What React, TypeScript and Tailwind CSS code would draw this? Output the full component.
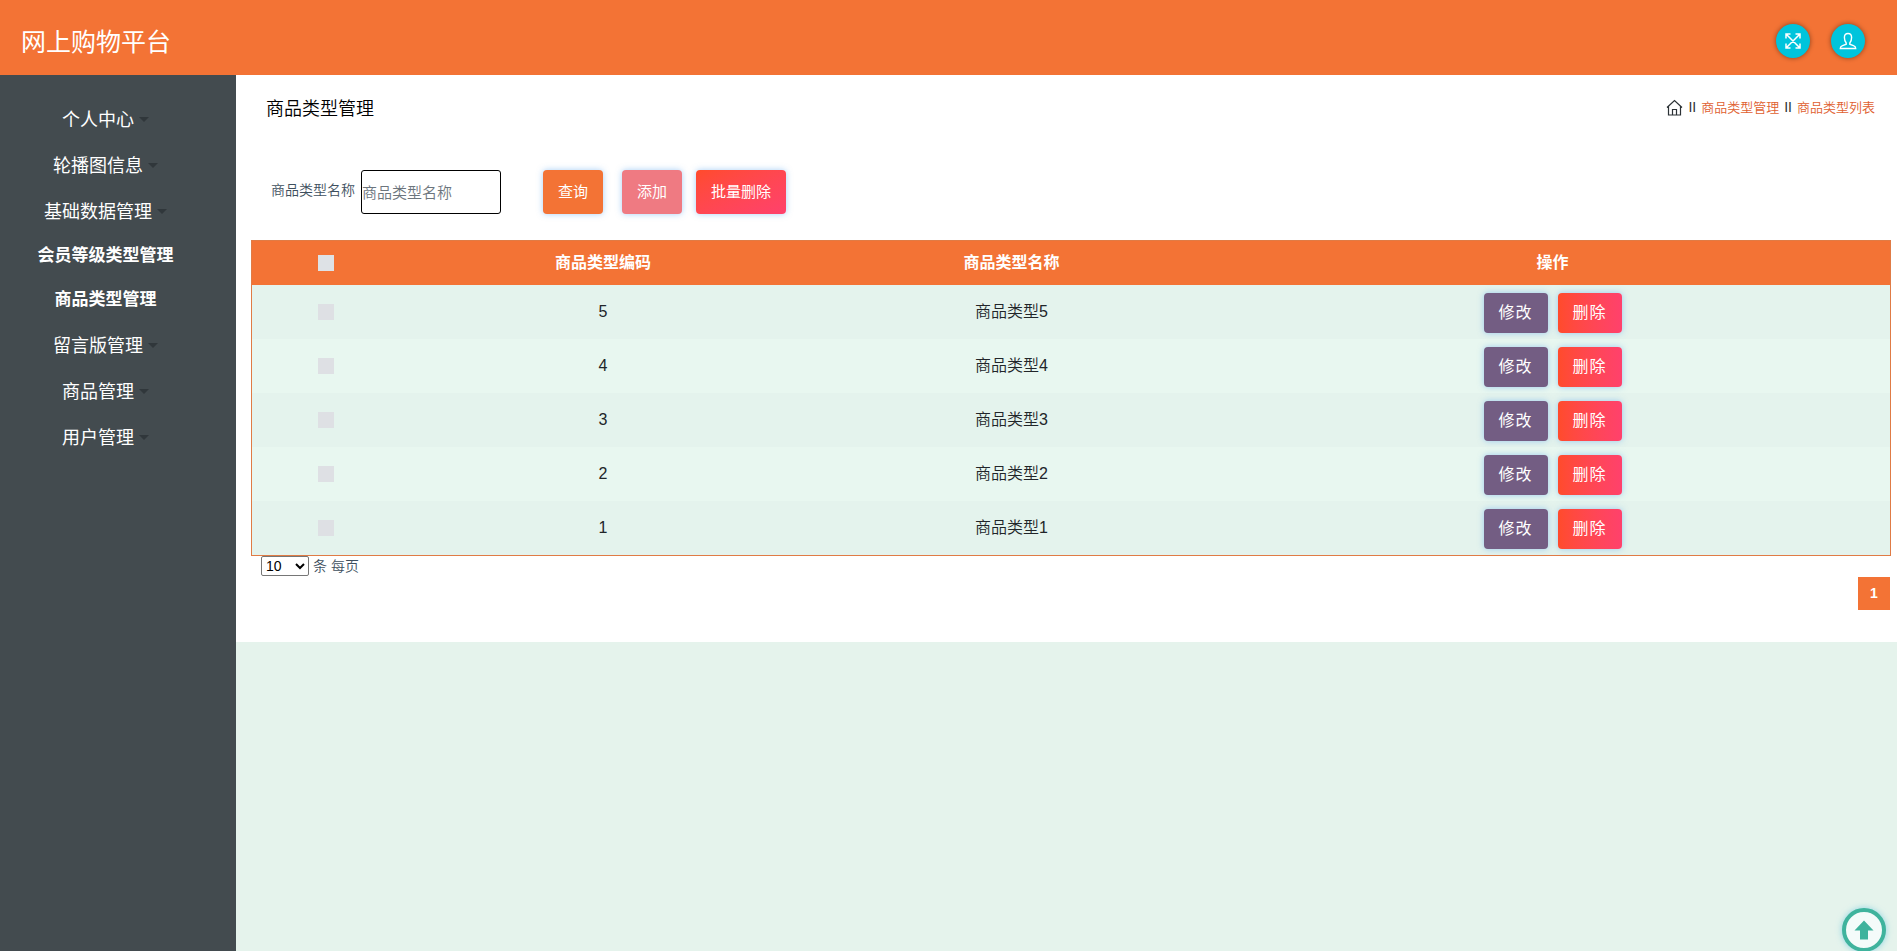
import { useState } from "react";

const MENU = [
  { label: "个人中心" },
  { label: "轮播图信息" },
  { label: "基础数据管理", children: ["会员等级类型管理", "商品类型管理"] },
  { label: "留言版管理" },
  { label: "商品管理" },
  { label: "用户管理" },
];

const ROWS = [5, 4, 3, 2, 1].map((n) => ({ code: n, name: `商品类型${n}` }));

const GLOW = "shadow-[0_0_6px_rgba(80,160,240,0.5)]";

function Sidebar() {
  return (
    <aside className="w-[236px] shrink-0 bg-[#434b4f] pt-[21px] pr-[25px] text-white">
      {MENU.map((item) => (
        <div key={item.label}>
          <div className="flex h-[46px] items-center justify-center pt-0.5 text-[18px]">
            {item.label}
            <span className="mb-0.5 ml-[5px] border-x-[5px] border-t-[5px] border-x-transparent border-t-[#30373b]" />
          </div>
          {item.children?.map((child) => (
            <div key={child} className="flex h-[44px] items-center justify-center text-[17px] font-bold">
              {child}
            </div>
          ))}
        </div>
      ))}
    </aside>
  );
}

function Header() {
  return (
    <header className="flex h-[75px] items-center justify-between bg-[#f37335] pr-8 pl-[21px]">
      <h1 className="mt-[11px] text-[25px] text-white">网上购物平台</h1>
      <div className="mt-1.5 flex gap-[21px] text-white">
        <button className="flex h-[34px] w-[34px] items-center justify-center rounded-full bg-[#00c4dc] shadow-[0_0_5px_rgba(0,0,0,0.45)]">
          <svg width="16" height="16" viewBox="0 0 16 16" fill="none" stroke="currentColor" strokeWidth="1.5">
            <path d="M1 1l14 14M15 1L1 15M1 5.500V1h4.500M10.500 1H15v4.500M15 10.500V15h-4.500M5.500 15H1v-4.500" />
          </svg>
        </button>
        <button className="flex h-[34px] w-[34px] items-center justify-center rounded-full bg-[#00c4dc] shadow-[0_0_5px_rgba(0,0,0,0.45)]">
          <svg width="18" height="18" viewBox="0 0 18 18" fill="none" stroke="currentColor" strokeWidth="1.4">
            <path d="M7.200 11C5.900 9.500 5.400 8 5.400 5.500 5.400 3 6.700 1.500 9 1.500s3.600 1.500 3.600 4c0 2.500-.5 4-1.800 5.500v1.200l4.200 1.600c1.200.4 1.700 1.200 1.700 2.700H1.300c0-1.500.5-2.300 1.700-2.700l4.200-1.600z" />
          </svg>
        </button>
      </div>
    </header>
  );
}

function Breadcrumb() {
  return (
    <nav className="mb-[5px] flex items-center text-[13px] font-[350] text-[#e0602f]">
      <svg width="17" height="17" viewBox="0 0 17 17" fill="none" stroke="#2b3135" strokeWidth="1.2">
        <path d="M1 8.500L8.500 1.500l7.500 7M2.500 7.200v8.800h12V7.200M6.500 16v-5.500h4V16" />
      </svg>
      <span className="mx-[5px] text-[14px] text-[#2b3135]">II</span>
      <a>商品类型管理</a>
      <span className="mx-[5px] text-[14px] text-[#2b3135]">II</span>
      <a>商品类型列表</a>
    </nav>
  );
}

function SearchBar() {
  return (
    <div className="mt-[47px] flex h-[44px] items-center pl-5 text-[15px] text-white">
      <label className="mb-[3px] w-[90px] text-[14px] font-[350] text-[#3e4f5e]">商品类型名称</label>
      <input
        placeholder="商品类型名称"
        className="h-[44px] w-[140px] rounded-[3px] border border-black font-[350] text-gray-700 placeholder:text-[#6c757d]"
      />
      <button className={`ml-[42px] h-[44px] w-[60px] rounded bg-[#f37335] ${GLOW}`}>查询</button>
      <button className={`ml-[19px] h-[44px] w-[60px] rounded bg-[#ef7a82] ${GLOW}`}>添加</button>
      <button className={`ml-[14px] h-[44px] w-[90px] rounded bg-linear-to-br from-[#ff4b2b] to-[#ff416c] ${GLOW}`}>
        批量删除
      </button>
    </div>
  );
}

function TypeTable() {
  const [checked, setChecked] = useState<number[]>([]);
  const allChecked = checked.length === ROWS.length;

  function toggle(code: number) {
    setChecked(checked.includes(code) ? checked.filter((c) => c !== code) : [...checked, code]);
  }

  return (
    <div className="mt-[26px] border border-[#e07b45] text-center text-[16px] text-[#212529]">
      <div className="grid h-[44px] grid-cols-[148px_406px_411px_1fr] items-center bg-[#f37335] pr-0.5 font-bold text-white">
        <span
          onClick={() => setChecked(allChecked ? [] : ROWS.map((r) => r.code))}
          className={`mx-auto h-4 w-4 ${allChecked ? "bg-sky-500" : "bg-[#dee2e6]"}`}
        />
        <span>商品类型编码</span>
        <span>商品类型名称</span>
        <span>操作</span>
      </div>
      {ROWS.map((row) => (
        <div
          key={row.code}
          className="grid h-[54px] grid-cols-[148px_406px_411px_1fr] items-center pr-0.5 font-[350] odd:bg-[#e8f7f0] even:bg-[#e4f3ed]"
        >
          <span
            onClick={() => toggle(row.code)}
            className={`mx-auto h-4 w-4 ${checked.includes(row.code) ? "bg-sky-500" : "bg-[#dee0e4]"}`}
          />
          <span>{row.code}</span>
          <span>{row.name}</span>
          <div className="flex justify-center gap-2.5 pt-0.5 font-normal tracking-[1px] text-white">
            <button className={`h-[40px] w-[64px] rounded bg-[#735d83] ${GLOW}`}>修改</button>
            <button className={`h-[40px] w-[64px] rounded bg-linear-to-r from-[#ff4b2b] to-[#ff416c] ${GLOW}`}>
              删除
            </button>
          </div>
        </div>
      ))}
    </div>
  );
}

export default function App() {
  return (
    <div className="flex h-screen flex-col overflow-hidden bg-[#e5f3ec] font-['Liberation_Sans','Noto_Sans_CJK_SC',sans-serif]">
      <Header />
      <div className="flex flex-1">
        <Sidebar />
        <main className="h-[567px] flex-1 bg-white pr-1.5 pl-[15px]">
          <div className="flex h-[48px] items-end justify-between pr-4 pl-[15px]">
            <h2 className="text-[18px] font-[350] text-black">商品类型管理</h2>
            <Breadcrumb />
          </div>
          <SearchBar />
          <TypeTable />
          <div className="flex h-5 items-center pl-2.5 text-[14px] font-[350] text-[#3e4f5e]">
            <select className="mr-1 h-5 w-[48px] rounded-[2px] border border-[#767676] text-[14px] font-normal text-black">
              <option>10</option>
              <option>20</option>
            </select>
            条 每页
          </div>
          <div className="flex justify-end pr-px">
            <button className="mt-px h-[33px] w-[32px] bg-[#f37335] text-[14px] font-bold text-white">1</button>
          </div>
        </main>
      </div>
      <button className="fixed right-[11px] bottom-[-1px] flex h-[44px] w-[44px] items-center justify-center rounded-full border-4 border-[#3fb39d] bg-[#f4fbfa] shadow-[0_0_6px_rgba(80,190,220,0.6)]">
        <svg width="20" height="20" viewBox="0 0 20 20" fill="#3fb39d">
          <path d="M10 .5l9.500 10H14v9H6v-9H.5z" />
        </svg>
      </button>
    </div>
  );
}
